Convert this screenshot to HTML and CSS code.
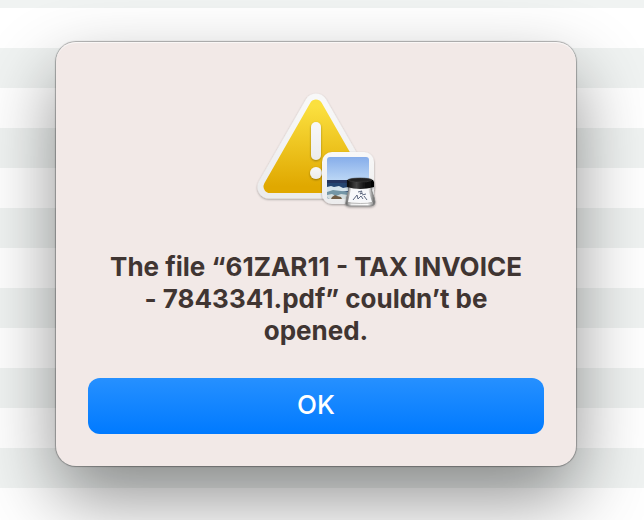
FILE: index.html
```html
<!DOCTYPE html>
<html lang="en">
<head>
    <meta charset="UTF-8">
    <meta name="viewport" content="width=device-width, initial-scale=1.0">
    <title>Alert</title>
    <link rel="stylesheet" href="styles.css">
</head>
<body>
    <div class="alert" role="alertdialog" aria-labelledby="alertMessage">
        <svg class="alert-icon" viewBox="0 0 128 128" aria-hidden="true">
            <defs>
                <linearGradient id="yellow" x1="0" y1="0" x2="0" y2="1">
                    <stop offset="0" stop-color="#fbe03f"/>
                    <stop offset="1" stop-color="#e0a800"/>
                </linearGradient>
                <linearGradient id="frame" x1="0" y1="0" x2="0" y2="1">
                    <stop offset="0" stop-color="#f8f8f8"/>
                    <stop offset="1" stop-color="#ececed"/>
                </linearGradient>
                <linearGradient id="sky" x1="0" y1="0" x2="0" y2="1">
                    <stop offset="0" stop-color="#86adea"/>
                    <stop offset="1" stop-color="#bdd8f6"/>
                </linearGradient>
                <linearGradient id="cap" x1="0" y1="0" x2="1" y2="0">
                    <stop offset="0" stop-color="#050505"/>
                    <stop offset="0.35" stop-color="#444"/>
                    <stop offset="0.6" stop-color="#151515"/>
                    <stop offset="1" stop-color="#000"/>
                </linearGradient>
                <linearGradient id="glass" x1="0" y1="0" x2="1" y2="0">
                    <stop offset="0" stop-color="#555"/>
                    <stop offset="0.2" stop-color="#eee"/>
                    <stop offset="0.75" stop-color="#fff"/>
                    <stop offset="1" stop-color="#555"/>
                </linearGradient>
                <filter id="drop" x="-20%" y="-20%" width="140%" height="140%">
                    <feDropShadow dx="0" dy="1" stdDeviation="1" flood-color="#000" flood-opacity="0.35"/>
                </filter>
                <clipPath id="photo">
                    <rect x="75" y="75" width="42" height="42" rx="3"/>
                </clipPath>
            </defs>

            <!-- warning triangle -->
            <g filter="url(#drop)">
                <path d="M64 23 L17 105 H111 Z" fill="url(#frame)" stroke="url(#frame)" stroke-width="23" stroke-linejoin="round"/>
            </g>
            <path d="M64 24 L18 104.500 H110 Z" fill="url(#yellow)" stroke="url(#yellow)" stroke-width="13" stroke-linejoin="round"/>
            <g filter="url(#drop)" fill="url(#frame)">
                <rect x="59" y="40" width="10" height="38" rx="5"/>
                <circle cx="64" cy="91" r="6"/>
            </g>

            <!-- app badge -->
            <rect x="70" y="70" width="52" height="52" rx="10" fill="url(#frame)" filter="url(#drop)"/>
            <g clip-path="url(#photo)">
                <rect x="75" y="75" width="42" height="24" fill="url(#sky)"/>
                <rect x="75" y="98" width="42" height="19" fill="#254571"/>
                <rect x="75" y="98" width="42" height="3" fill="#24345f"/>
                <path d="M75 105l4-1 3 1 5-1 4 2 5-1v4l-8 1-5-1-8 2z" fill="#d7e5ed"/>
                <path d="M75 110l6-2 8 1 7 1v8H75z" fill="#7496a6"/>
                <path d="M75 113l5-1 4 2 5-2 7 1v5H75z" fill="#d5dedf"/>
                <path d="M80 115l3-2 2 1 4 1 1 2H79z" fill="#715d46"/>
            </g>
            <g filter="url(#drop)">
                <path d="M97 105h22c0 5 4 10 4 15 0 3-2 4-5 4H98c-3 0-5-1-4-4 0-5 3-10 3-15z" fill="url(#glass)" stroke="#888" stroke-width="1"/>
                <path d="M99 107h17l4 13H96z" fill="#f7f8fa"/>
                <path d="M96 121q12 1 25 0" fill="none" stroke="#bbb"/>
                <path d="M106 110l4-1-2 3 3-1M101 118l4-5 1 4 3-3 2 3M112 114l3 4M110 113l4-1" fill="none" stroke="#5d6880" stroke-width="1"/>
                <path d="M95 98q13-4 26 0l1 2v5q-14 4-27 0z" fill="url(#cap)"/>
                <ellipse cx="108" cy="98" rx="12" ry="2" fill="#202020" stroke="#444" stroke-width="0.5"/>
            </g>
        </svg>
        <h1 class="alert-message" id="alertMessage">The file “61ZAR11 - TAX INVOICE - 7843341.pdf” couldn’t be opened.</h1>
        <button class="btn btn-primary" type="button">OK</button>
    </div>
</body>
</html>
```
FILE: styles.css
```css
* {
    box-sizing: border-box;
}

body {
    margin: 0;
    padding: 42px 68px 54px 56px;
    font-family: Inter, "Liberation Sans", sans-serif;
    background: repeating-linear-gradient(#f0f3f2 0 40px, #fff 40px 80px) 0 -32px / 100% 640px;
}

.alert {
    display: flex;
    flex-direction: column;
    align-items: center;
    padding: 40px 32px 32px;
    background: #f2e9e7;
    border-radius: 20px;
    box-shadow: inset 0 1px 1px rgba(255,255,255,0.7), 0 0 1px 1px rgba(0,0,0,0.3), 0 32px 72px rgba(0,0,0,0.44);
}

.alert-icon {
    width: 128px;
    height: 128px;
}

.alert-message {
    margin: 41px 16px 31px;
    color: #403532;
    font-size: 26px;
    font-weight: 700;
    line-height: 32px;
    text-align: center;
}

.btn {
    width: 100%;
    height: 56px;
    padding: 0 0 4px;
    border: none;
    border-radius: 12px;
    font-family: inherit;
    font-size: 26px;
    font-weight: 500;
}

.btn-primary {
    background: linear-gradient(#2690ff, #007aff);
    color: white;
}
```
